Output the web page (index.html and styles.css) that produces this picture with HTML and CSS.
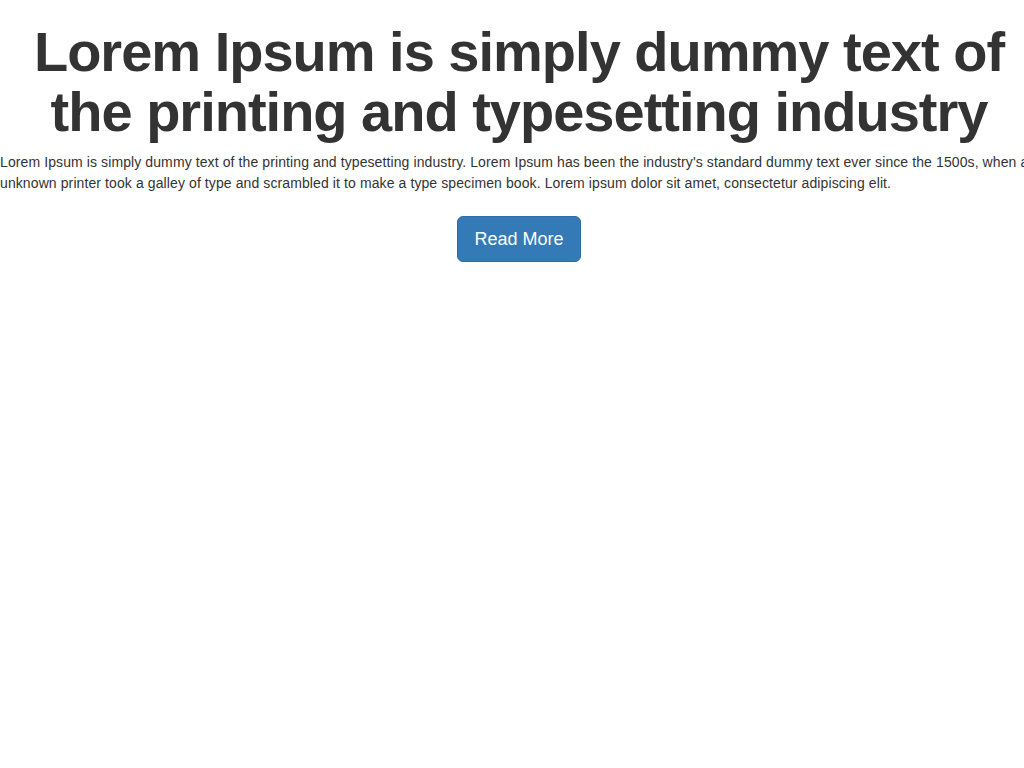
FILE: index.html
```html
<!DOCTYPE html>
<html lang="en">
<head>
<meta charset="utf-8">
<title>Lorem Ipsum</title>
<link rel="stylesheet" href="styles.css">
</head>
<body>
<div class="page">
  <h1 class="title">Lorem Ipsum is simply dummy text of the printing and typesetting industry</h1>
  <p class="lead-text">Lorem Ipsum is simply dummy text of the printing and typesetting industry. Lorem Ipsum has been the industry's standard dummy text ever since the 1500s, when an unknown printer took a galley of type and scrambled it to make a type specimen book. Lorem ipsum dolor sit amet, consectetur adipiscing elit.</p>
  <div class="actions">
    <a class="btn-read" href="#">Read More</a>
  </div>
</div>
</body>
</html>
```
FILE: styles.css
```css
html, body {
  margin: 0;
  padding: 0;
  background: #fff;
  overflow-x: hidden;
}
body {
  font-family: "Liberation Sans", Arial, Helvetica, sans-serif;
  color: #333;
  font-size: 14px;
  line-height: 20px;
}
.page {
  width: 1038px;
}
.title {
  margin: 22px 0 10px;
  font-size: 56px;
  line-height: 60px;
  font-weight: 700;
  letter-spacing: -1px;
  text-align: center;
  color: #333;
}
.lead-text {
  width: 1060px;
  margin: 0 0 22px;
  font-size: 14px;
  line-height: 21px;
  letter-spacing: 0.1px;
}
.actions {
  display: flex;
  justify-content: center;
}
.btn-read {
  display: inline-block;
  padding: 10px 16px;
  font-size: 18px;
  line-height: 24px;
  color: #fff;
  background: #337ab7;
  border: 1px solid #2e6da4;
  border-radius: 6px;
  text-decoration: none;
}
```
